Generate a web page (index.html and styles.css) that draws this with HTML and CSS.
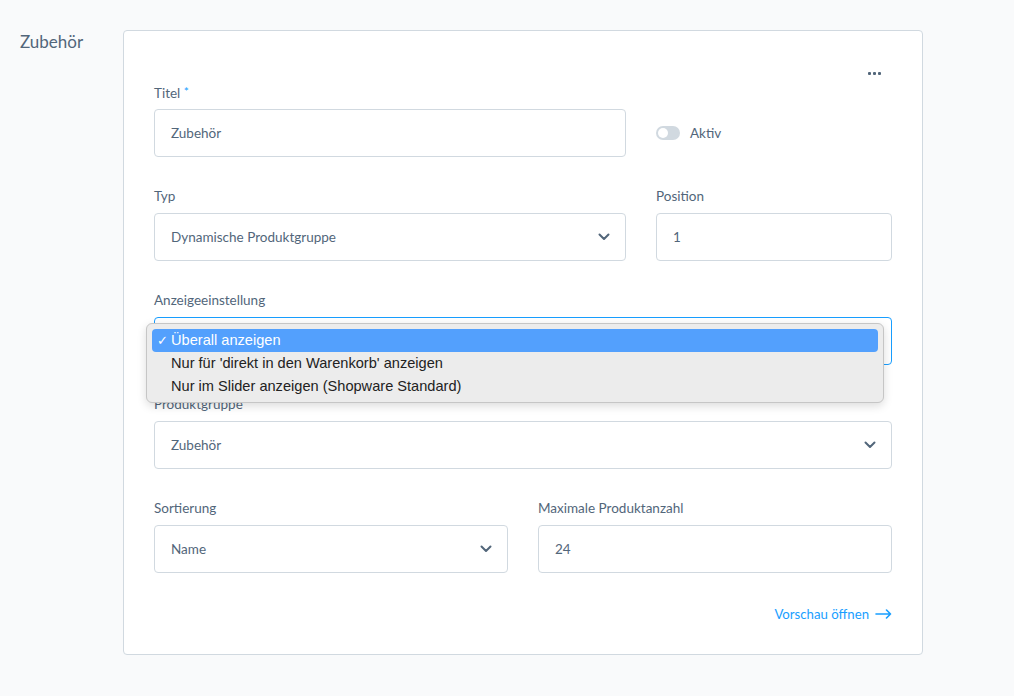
FILE: index.html
```html
<!DOCTYPE html>
<html lang="de">
<head>
<meta charset="utf-8">
<title>Zubehör</title>
<link rel="stylesheet" href="styles.css">
</head>
<body>
<div class="page">
  <h2 class="side-title">Zubehör</h2>
  <div class="card">
    <div class="card-top">
      <button class="ctx-btn" aria-label="Mehr">
        <span class="dot"></span><span class="dot"></span><span class="dot"></span>
      </button>
    </div>

    <div class="row two-narrow">
      <div class="field">
        <label class="label">Titel <span class="req">*</span></label>
        <div class="control"><span class="value">Zubehör</span></div>
      </div>
      <div class="field toggle-field">
        <div class="toggle-wrap">
          <span class="switch"><span class="knob"></span></span>
          <span class="toggle-label">Aktiv</span>
        </div>
      </div>
    </div>

    <div class="row two-narrow">
      <div class="field">
        <label class="label">Typ</label>
        <div class="control select"><span class="value">Dynamische Produktgruppe</span>
          <svg class="chev" width="12" height="8" viewBox="0 0 12 8"><path d="M1.5 1.5 L6 6 L10.5 1.5" fill="none" stroke="#52667a" stroke-width="2" stroke-linecap="round" stroke-linejoin="round"/></svg>
        </div>
      </div>
      <div class="field">
        <label class="label">Position</label>
        <div class="control"><span class="value">1</span></div>
      </div>
    </div>

    <div class="row">
      <div class="field popup-host">
        <label class="label">Anzeigeeinstellung</label>
        <div class="control select focused"><span class="value"></span></div>
        <div class="popup">
          <div class="opt active"><span class="check">✓</span>Überall anzeigen</div>
          <div class="opt"><span class="check"></span>Nur für 'direkt in den Warenkorb' anzeigen</div>
          <div class="opt"><span class="check"></span>Nur im Slider anzeigen (Shopware Standard)</div>
        </div>
      </div>
    </div>

    <div class="row">
      <div class="field">
        <label class="label">Produktgruppe</label>
        <div class="control select"><span class="value">Zubehör</span>
          <svg class="chev" width="12" height="8" viewBox="0 0 12 8"><path d="M1.5 1.5 L6 6 L10.5 1.5" fill="none" stroke="#52667a" stroke-width="2" stroke-linecap="round" stroke-linejoin="round"/></svg>
        </div>
      </div>
    </div>

    <div class="row two-equal">
      <div class="field">
        <label class="label">Sortierung</label>
        <div class="control select"><span class="value">Name</span>
          <svg class="chev" width="12" height="8" viewBox="0 0 12 8"><path d="M1.5 1.5 L6 6 L10.5 1.5" fill="none" stroke="#52667a" stroke-width="2" stroke-linecap="round" stroke-linejoin="round"/></svg>
        </div>
      </div>
      <div class="field">
        <label class="label">Maximale Produktanzahl</label>
        <div class="control"><span class="value">24</span></div>
      </div>
    </div>

    <div class="link-row">
      <a class="preview-link" href="#">Vorschau öffnen
        <svg width="17" height="10" viewBox="0 0 17 10"><path d="M1 5 H15.5 M11.5 1 L15.5 5 L11.5 9" fill="none" stroke="#189eff" stroke-width="1.6" stroke-linecap="round" stroke-linejoin="round"/></svg>
      </a>
    </div>
  </div>
</div>
</body>
</html>
```

FILE: styles.css
```css
* { box-sizing: border-box; }
html, body { margin: 0; padding: 0; }
body {
  background: #f9fafb;
  font-family: Lato, "Noto Sans", sans-serif;
  color: #52667a;
  width: 1014px;
  height: 696px;
  overflow: hidden;
}
.page {
  display: flex;
  padding: 30px 0 0 20px;
}
.side-title {
  margin: 0;
  width: 103px;
  flex: none;
  font-size: 17px;
  font-weight: 400;
  line-height: 24px;
  color: #52667a;
}
.card {
  width: 800px;
  background: #fff;
  border: 1px solid #d1d9e0;
  border-radius: 4px;
  padding: 32px 30px 30px 30px;
}
.card-top {
  display: flex;
  justify-content: flex-end;
  height: 20px;
}
.ctx-btn {
  border: 0;
  background: none;
  padding: 0;
  margin-right: 11px;
  height: 20px;
  display: flex;
  align-items: center;
  gap: 2px;
}
.dot {
  width: 3px;
  height: 3px;
  border-radius: 1px;
  background: #52667a;
}
.row {
  display: grid;
  grid-template-columns: 1fr;
  column-gap: 30px;
}
.row.two-narrow { grid-template-columns: 1fr 236px; }
.row.two-equal { grid-template-columns: 1fr 1fr; }
.field {
  display: flex;
  flex-direction: column;
  margin-bottom: 30px;
}
.label {
  display: block;
  font-size: 13.5px;
  line-height: 18px;
  height: 20px;
  margin-bottom: 6px;
  color: #52667a;
}
.req { color: #189eff; font-size: 12px; vertical-align: 2px; }
.control {
  height: 48px;
  border: 1px solid #d1d9e0;
  border-radius: 4px;
  display: flex;
  align-items: center;
  padding: 0 16px;
  font-size: 13.5px;
  color: #52667a;
  background: #fff;
}
.control .value { flex: 1; }
.control.focused { border-color: #189eff; }
.chev { flex: none; margin-right: -1px; }
.toggle-field { padding-top: 26px; }
.toggle-wrap {
  height: 48px;
  display: flex;
  align-items: center;
  gap: 10px;
}
.switch {
  width: 24px;
  height: 14px;
  border-radius: 7px;
  background: #d1d9e0;
  position: relative;
  display: block;
}
.knob {
  position: absolute;
  left: 2px;
  top: 2px;
  width: 10px;
  height: 10px;
  border-radius: 50%;
  background: #fff;
}
.toggle-label { font-size: 13.5px; }
.popup-host { position: relative; }
.popup {
  position: absolute;
  left: -8px;
  top: 32px;
  width: 738px;
  height: 80px;
  background: #ececec;
  border: 1px solid #c6c6c6;
  border-radius: 6px;
  box-shadow: 0 3px 10px rgba(0,0,0,0.14);
  padding: 5px 5px;
  font-family: "Liberation Sans", Arial, sans-serif;
  font-size: 14.6px;
  color: #222;
  z-index: 5;
}
.opt {
  height: 23px;
  line-height: 23px;
  display: flex;
  border-radius: 4px;
  padding-left: 5px;
}
.opt.active { background: #53a0fd; color: #fff; }
.check { width: 14px; flex: none; font-size: 13px; }
.link-row {
  display: flex;
  justify-content: flex-end;
  margin-top: 1px;
  height: 20px;
}
.preview-link {
  color: #189eff;
  text-decoration: none;
  font-size: 13.2px;
  line-height: 20px;
  display: flex;
  align-items: center;
  gap: 6px;
}
```
